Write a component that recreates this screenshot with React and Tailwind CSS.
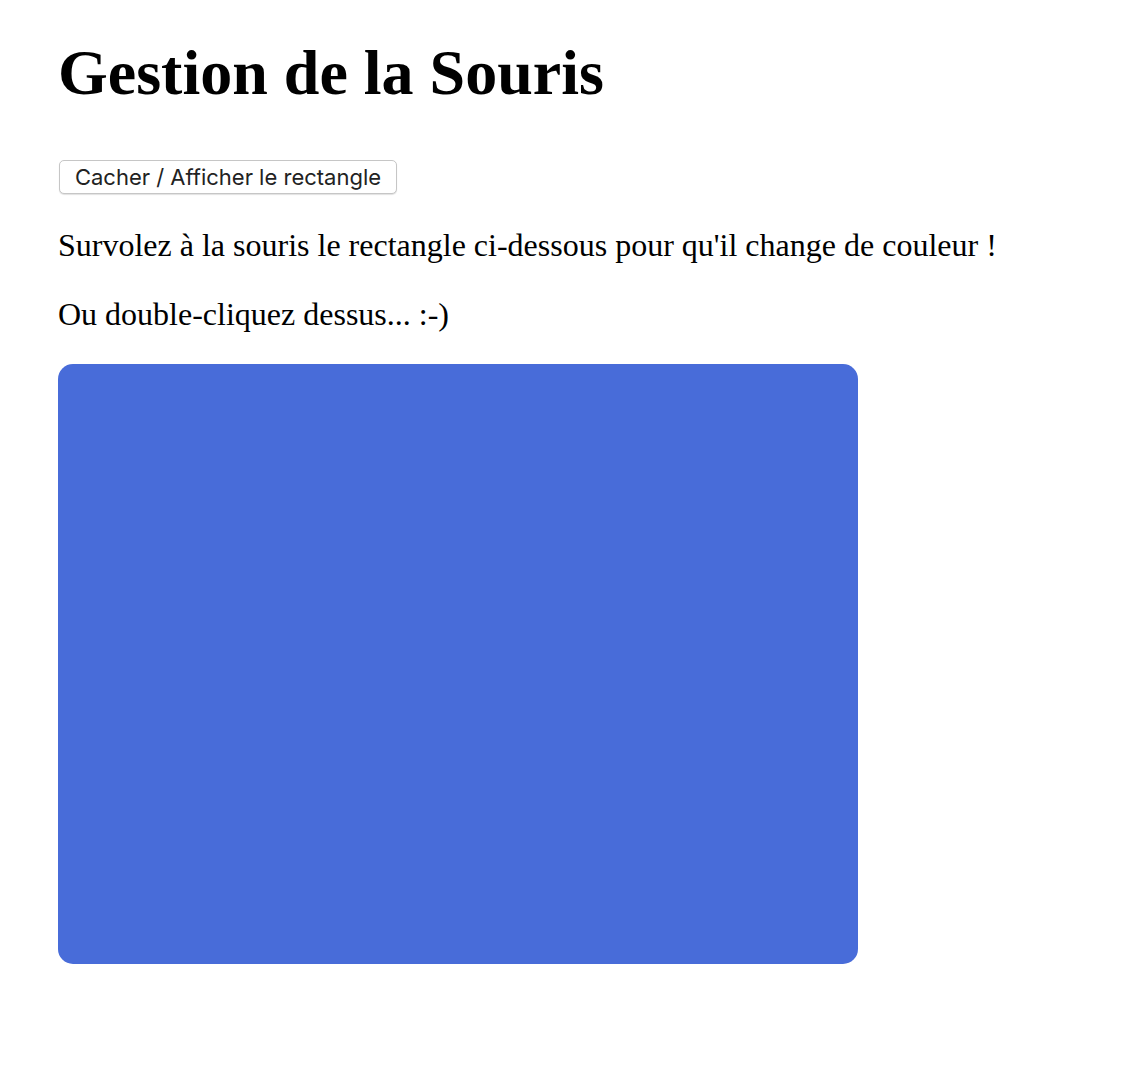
import React from "react";

export default function App() {
  return (
    <div className="min-h-[1074px] bg-white pl-[58px] pt-[37px] text-black">
      <h1 className="font-['Liberation_Serif',serif] text-[64px] font-bold leading-[71px]">
        Gestion de la Souris
      </h1>
      <button
        type="button"
        className="mt-[52px] ml-[1px] flex h-[34px] w-[338px] items-center justify-center rounded-[5px] border border-[#c6c6c6] bg-white font-['Inter',sans-serif] text-[22px] leading-none text-[#222] shadow-[0_1px_1px_rgba(0,0,0,0.12)]"
      >
        Cacher / Afficher le rectangle
      </button>
      <p className="mt-[33px] font-['Liberation_Serif',serif] text-[32px] leading-[36px]">
        Survolez à la souris le rectangle ci-dessous pour qu'il change de couleur !
      </p>
      <p className="mt-[33px] font-['Liberation_Serif',serif] text-[32px] leading-[36px]">
        Ou double-cliquez dessus... :-)
      </p>
      <div className="mt-[32px] h-[600px] w-[800px] rounded-[15px] bg-[#486cd9]" />
    </div>
  );
}
